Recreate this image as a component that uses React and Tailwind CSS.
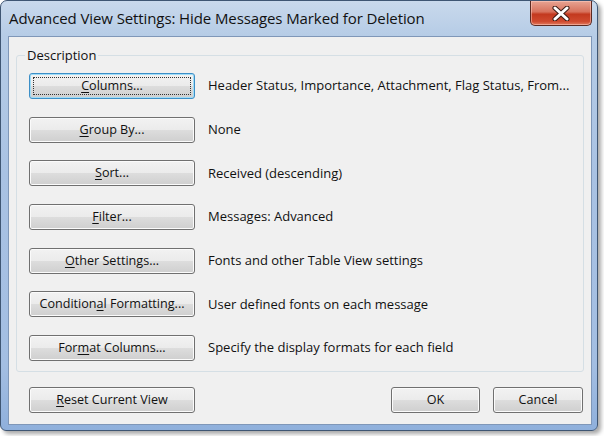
import React from 'react';

const rows = [
  { pre: '', key: 'C', post: 'olumns...', desc: 'Header Status, Importance, Attachment, Flag Status, From...', focus: true },
  { pre: '', key: 'G', post: 'roup By...', desc: 'None' },
  { pre: '', key: 'S', post: 'ort...', desc: 'Received (descending)' },
  { pre: '', key: 'F', post: 'ilter...', desc: 'Messages: Advanced' },
  { pre: '', key: 'O', post: 'ther Settings...', desc: 'Fonts and other Table View settings' },
  { pre: 'Condition', key: 'a', post: 'l Formatting...', desc: 'User defined fonts on each message' },
  { pre: 'For', key: 'm', post: 'at Columns...', desc: 'Specify the display formats for each field' },
];

const btnBase =
  'relative flex items-center justify-center h-[26px] rounded-[3px] border text-[12.6px] leading-[16px] text-[#111] bg-[linear-gradient(#f2f2f2_0%,#ebebeb_50%,#dddddd_50%,#cfcfcf_100%)]';

const WinButton = ({ children, focus, className = '' }) => (
  <button
    className={
      btnBase +
      ' ' +
      (focus
        ? 'border-[#3c8fc7] shadow-[inset_0_0_0_1px_#9fdcf7]'
        : 'border-[#707070] shadow-[inset_0_0_0_1px_#fbfbfb]') +
      ' ' +
      className
    }
  >
    {focus && <span className="absolute inset-[3px] border border-dotted border-[#333]" />}
    <span className="relative">{children}</span>
  </button>
);

const Label = ({ pre, k, post }) => (
  <>
    {pre}
    <span className="underline underline-offset-2">{k}</span>
    {post}
  </>
);

export default function App() {
  return (
    <div
      className="w-[604px] h-[436px] bg-white overflow-hidden"
      style={{ fontFamily: '"Open Sans", "Noto Sans", sans-serif' }}
    >
      <div className="w-[598px] h-[431px] flex flex-col rounded-t-[7px] rounded-b-[6px] border border-[#3f5673] shadow-[3px_3px_4px_rgba(0,0,0,0.35)] bg-[linear-gradient(180deg,#c9d9ec_0%,#b6cce6_8%,#a9c2e3_40%,#a3bee2_85%,#8fb0dc_100%)]">
        {/* title bar */}
        <div className="h-[35px] flex justify-between shrink-0">
          <div className="pl-[8px] pt-[6px] text-[15px] text-[#111] tracking-[-0.1px]">
            Advanced View Settings: Hide Messages Marked for Deletion
          </div>
          <div className="mr-[5px] w-[62px] h-[25px] rounded-b-[5px] border border-t-0 border-[#5b2a22] flex items-center justify-center bg-[linear-gradient(180deg,#e8a493_0%,#d7725d_45%,#c3391f_55%,#cf4a2f_85%,#e07a5e_100%)] shadow-[inset_0_0_0_1px_rgba(255,210,200,0.5)]">
            <svg width="18" height="15" viewBox="0 0 18 15">
              <path d="M3 2 L15 13 M15 2 L3 13" stroke="#3a1a14" strokeWidth="5" strokeLinecap="round" />
              <path d="M3 2 L15 13 M15 2 L3 13" stroke="#ffffff" strokeWidth="3" strokeLinecap="round" />
            </svg>
          </div>
        </div>

        {/* client area */}
        <div className="ml-[7px] mr-[5px] mb-[5px] flex-1 border border-[#7f97b8] bg-[#f0f0f0] flex flex-col px-[7px] pt-[10px]">
          <fieldset className="border border-[#d5dfe5] rounded-[3px] pl-[12px] pr-[8px] pb-[10px] pt-[9px]">
            <legend className="ml-[-4px] px-[2px] text-[13px] text-[#111] leading-[17px]">Description</legend>
            <div className="flex flex-col gap-[17.7px]">
              {rows.map((r, i) => (
                <div key={i} className="flex items-center">
                  <WinButton focus={r.focus} className="w-[166px] shrink-0">
                    <Label pre={r.pre} k={r.key} post={r.post} />
                  </WinButton>
                  <div className="ml-[13px] text-[13px] text-[#111] whitespace-nowrap">{r.desc}</div>
                </div>
              ))}
            </div>
          </fieldset>

          <div className="flex items-center mt-[15px] pl-[13px] pr-[1px]">
            <WinButton className="w-[166px]">
              <Label pre="" k="R" post="eset Current View" />
            </WinButton>
            <div className="flex-1" />
            <WinButton className="w-[89px]">OK</WinButton>
            <WinButton className="w-[90px] ml-[13px]">Cancel</WinButton>
          </div>
        </div>
      </div>
    </div>
  );
}
